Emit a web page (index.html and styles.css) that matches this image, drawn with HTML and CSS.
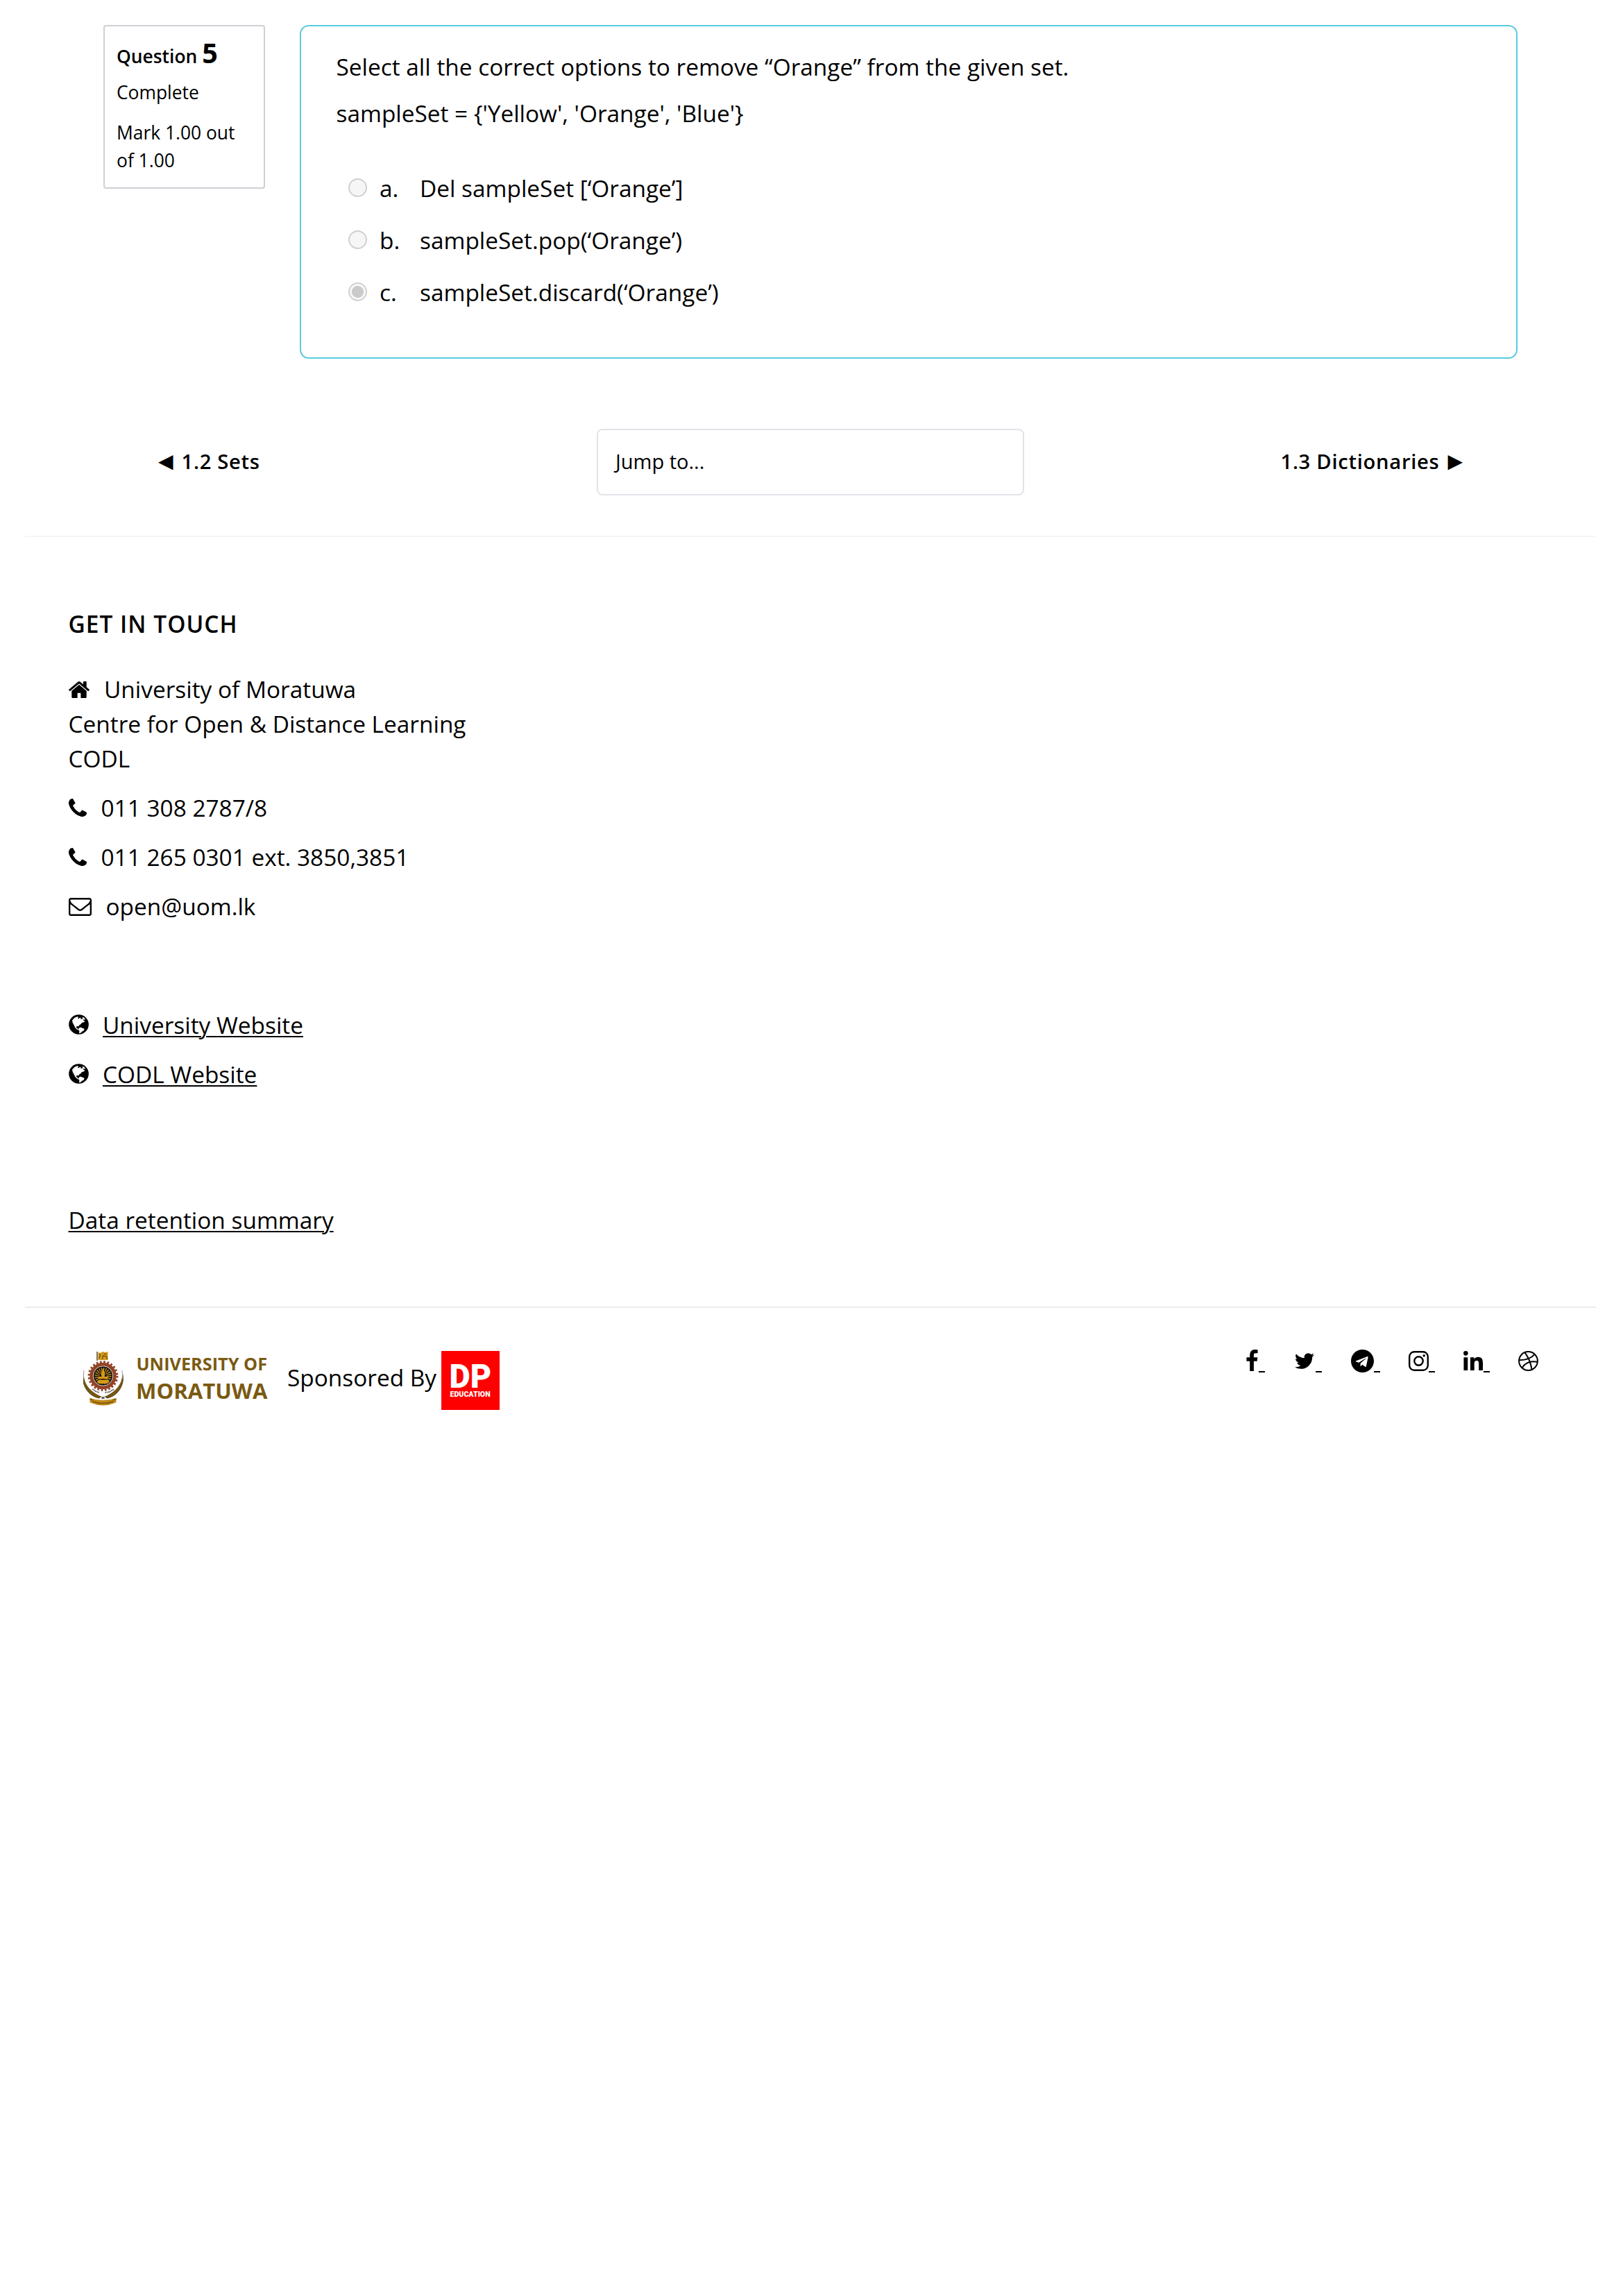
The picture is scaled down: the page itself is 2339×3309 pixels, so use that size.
FILE: index.html
```html
<!DOCTYPE html>
<html lang="en">
<head>
<meta charset="utf-8">
<title>Quiz review</title>
<link rel="stylesheet" href="styles.css">
</head>
<body>
<main class="page">
  <section class="question">
    <aside class="info">
      <h3 class="info-no">Question <span class="qno">5</span></h3>
      <div class="info-state">Complete</div>
      <div class="info-grade">Mark 1.00 out of 1.00</div>
    </aside>
    <div class="formulation">
      <p>Select all the correct options to remove “Orange” from the given set.</p>
      <p>sampleSet = {'Yellow', 'Orange', 'Blue'}</p>
      <div class="answers">
        <div class="answer"><span class="radio"></span><span class="letter">a.</span><span>Del sampleSet [‘Orange’]</span></div>
        <div class="answer"><span class="radio"></span><span class="letter">b.</span><span>sampleSet.pop(‘Orange’)</span></div>
        <div class="answer"><span class="radio checked"></span><span class="letter">c.</span><span>sampleSet.discard(‘Orange’)</span></div>
      </div>
    </div>
  </section>

  <nav class="activity-nav">
    <a class="prev"><span class="arrow">◀</span><span>1.2 Sets</span></a>
    <div class="jump">Jump to...</div>
    <a class="next"><span>1.3 Dictionaries</span><span class="arrow">▶</span></a>
  </nav>

  <footer class="footer">
    <h2 class="footer-title">GET IN TOUCH</h2>
    <div class="contact">
      <div class="contact-row">
        <div class="line"><svg class="icon home" viewBox="89 257 1614 1279"><path d="M1472 992v480q0 26-19 45t-45 19h-384v-384h-256v384h-384q-26 0-45-19t-19-45v-480q0-1 .5-3t.5-3l575-474 575 474q1 2 1 6zm223-69l-62 74q-8 9-21 11h-3q-13 0-21-7l-692-577-692 577q-12 8-24 7-13-2-21-11l-62-74q-8-10-7-23.5t11-21.5l719-599q32-26 76-26t76 26l244 204v-195q0-14 9-23t23-9h192q14 0 23 9t9 23v408l219 182q10 8 11 21.5t-7 23.5z"/></svg>University of Moratuwa</div>
        <div class="line">Centre for Open &amp; Distance Learning</div>
        <div class="line">CODL</div>
      </div>
      <div class="line"><svg class="icon phone" viewBox="192 128 1408 1408"><use href="#phone"/></svg>011 308 2787/8</div>
      <div class="line"><svg class="icon phone" viewBox="192 128 1408 1408"><use href="#phone"/></svg>011 265 0301 ext. 3850,3851</div>
      <div class="line"><svg class="icon mail" viewBox="0 256 1792 1408"><path d="M1664 1504v-768q-32 36-69 66-268 206-426 338-51 43-83 67t-86.5 48.5-102.5 24.5h-2q-48 0-102.5-24.5t-86.5-48.5-83-67q-158-132-426-338-37-30-69-66v768q0 13 9.5 22.5t22.5 9.5h1472q13 0 22.5-9.5t9.5-22.5zm0-1051v-24.5l-.5-13-3-12.5-5.5-9-9-7.5-14-2.5h-1472q-13 0-22.5 9.5t-9.5 22.5q0 168 147 284 193 152 401 317 6 5 35 29.5t46 37.5 44.5 31.5 50.5 27.5 43 9h2q20 0 43-9t50.5-27.5 44.5-31.5 46-37.5 35-29.5q208-165 401-317 54-43 100.5-115.5t46.5-131.5zm128-37v1088q0 66-47 113t-113 47h-1472q-66 0-113-47t-47-113v-1088q0-66 47-113t113-47h1472q66 0 113 47t47 113z"/></svg>open@uom.lk</div>
    </div>
    <div class="links">
      <div class="line"><svg class="icon globe" viewBox="0 0 29 29"><use href="#earth"/></svg><a>University Website</a></div>
      <div class="line"><svg class="icon globe" viewBox="0 0 29 29"><use href="#earth"/></svg><a>CODL Website</a></div>
    </div>
    <div class="line"><a>Data retention summary</a></div>
  </footer>

  <div class="bottom">
    <div class="sponsors">
      <svg class="uom" viewBox="0 0 270 84" role="img" aria-label="University of Moratuwa">
        <g transform="translate(-2.5 -3)">
          <!-- lion flag on top of the crest -->
          <path d="M22.500 4v13" stroke="#4a3a10" stroke-width="1.400"/>
          <path d="M24 5l3 1 3-2 4 1 4-1v12H24z" fill="#d29a1d"/>
          <path d="M25 14l2-4-1-3M30 15l1-5 5 1 1 4M32 7l4 1" fill="none" stroke="#5d430d" stroke-width="1.100"/>
          <!-- tusks -->
          <path d="M3 36C2 50 12 62 28 69L25 71C10 68-1 52 3 36zM59 36C60 50 50 62 34 69L37 71C52 68 63 52 59 36z" fill="#77560f" stroke="#5d450f" stroke-width="1"/>
          <path d="M3.500 31l-1 12M58.500 31l1 12" stroke="#999" stroke-width="1"/>
          <!-- gear and sun -->
          <circle cx="31" cy="39" r="20.300" fill="none" stroke="#934326" stroke-width="3.200" stroke-dasharray="2.660 2.660"/>
          <circle cx="31" cy="39" r="16.800" fill="none" stroke="#934326" stroke-width="5"/>
          <circle cx="31" cy="39" r="14.200" fill="#111" stroke="#d8cfc6" stroke-width="1"/>
          <circle cx="31" cy="39" r="8.500" fill="none" stroke="#bd8717" stroke-width="7" stroke-dasharray="1.300 1.370"/>
          <path d="M31 28l3 8-1 4h5v3H24v-3h5l-1-4zM24 45h14l2 3-3 2H25l-3-2z" fill="#d69a17"/>
          <path d="M16 58l4 3 6 2M34 63l6-1 7-4" fill="none" stroke="#555" stroke-width="2" stroke-dasharray="1.500 .8"/>
          <!-- ribbon -->
          <path d="M29 69l4 3m0-3l-4 3" stroke="#333" stroke-width="1.200"/>
          <path d="M12 71q19 6 38 0v6l-2 1q-17 7-34 0l-2-1z" fill="#c08a1a"/>
          <path d="M16 76q15 5 30 0M12 72l5 2M50 72l-5 2" fill="none" stroke="#7a5510" stroke-width="1.500"/>
        </g>
        <text class="uom-text" x="76.500" y="27.500" font-size="25.200" textLength="188.500" lengthAdjust="spacingAndGlyphs">UNIVERSITY OF</text>
        <text class="uom-text" x="76" y="68.500" font-size="31" textLength="189.500" lengthAdjust="spacingAndGlyphs">MORATUWA</text>
      </svg>
      <span class="sponsored">Sponsored By</span>
      <svg class="dp" viewBox="0 0 84 85" role="img" aria-label="DP Education">
        <rect width="84" height="85" fill="#fe0000"/>
        <text class="dp-big" x="11.500" y="53" textLength="60.500" lengthAdjust="spacingAndGlyphs">DP</text>
        <text class="dp-small" x="12.600" y="66" textLength="58" lengthAdjust="spacingAndGlyphs">EDUCATION</text>
      </svg>
    </div>
    <ul class="social">
      <li><svg class="facebook" viewBox="479 0 864 1664"><path d="M1343 12v264h-157q-86 0-116 36t-30 108v189h293l-39 296h-254v759h-306v-759h-255v-296h255v-218q0-186 104-288.500t277-102.500q147 0 228 12z"/></svg><i></i></li>
      <li><svg class="twitter" viewBox="108 256 1576 1280"><path d="M1684 408q-67 98-162 167 1 14 1 42 0 130-38 259.500t-115.500 248.500-184.500 210.500-258 146-323 54.500q-271 0-496-145 35 4 78 4 225 0 401-138-105-2-188-64.500t-114-159.500q33 5 61 5 43 0 85-11-112-23-185.500-111.500t-73.500-205.500v-4q68 38 146 41-66-44-105-115t-39-154q0-88 44-163 121 149 294.500 238.500t371.500 99.500q-8-38-8-74 0-134 94.500-228.500t228.500-94.500q140 0 236 102 109-21 205-78-37 115-142 178 93-10 186-50z"/></svg><i></i></li>
      <li><svg class="telegram" viewBox="0 8 496 496"><path d="M248 8C111 8 0 119 0 256s111 248 248 248 248-111 248-248S385 8 248 8zm121.800 169.900l-40.700 191.800c-3 13.600-11.100 16.900-22.400 10.500l-62-45.700-29.900 28.800c-3.300 3.300-6.100 6.100-12.500 6.100l4.400-63.100 114.900-103.800c5-4.400-1.100-6.900-7.700-2.500l-142 89.400-61.200-19.100c-13.300-4.200-13.600-13.300 2.800-19.700l239.100-92.200c11.100-4 20.800 2.700 17.200 19.500z"/></svg><i></i></li>
      <li><svg class="instagram" viewBox="0 0 29 29"><rect x="1.200" y="1.200" width="26.600" height="26.600" rx="7" fill="none" stroke="#000" stroke-width="2.400"/><circle cx="14.500" cy="14.500" r="6.200" fill="none" stroke="#000" stroke-width="2.400"/><circle cx="22.200" cy="6.800" r="1.800"/></svg><i></i></li>
      <li><svg class="linkedin" viewBox="0 0 448 448"><path d="M100.280 448H7.400V148.900h92.880zM53.790 108.100C24.090 108.100 0 83.500 0 53.800a53.790 53.790 0 0 1 107.580 0c0 29.700-24.100 54.300-53.790 54.300zM447.900 448h-92.680V302.400c0-34.700-.7-79.200-48.290-79.200-48.290 0-55.690 37.700-55.690 76.700V448h-92.780V148.900h89.080v40.800h1.300c12.400-23.500 42.690-48.300 87.880-48.300 94 0 111.280 61.900 111.280 142.300V448z"/></svg><i></i></li>
      <li><svg class="dribbble" viewBox="0 0 29 29"><g fill="none" stroke="#000" stroke-width="2"><circle cx="14.500" cy="14.500" r="13.400"/><path d="M9.500 2.200Q17.500 13 19.600 26.800M1.200 13.200Q16.500 13.500 23.800 4.700M5.600 24.300Q12.500 12.800 27.800 15.800"/></g></svg></li>
    </ul>
  </div>
</main>

<svg class="defs" aria-hidden="true">
  <symbol id="phone" viewBox="192 128 1408 1408" width="1408" height="1408" x="192" y="128">
    <path d="M1600 1240q0 27-10 70.500t-21 68.500q-21 50-122 106-94 51-186 51-27 0-53-3.500t-57.500-12.500-47-14.500-55.500-20.500-49-18q-98-35-175-83-127-79-264-216t-216-264q-48-77-83-175-3-9-18-49t-20.500-55.500-14.500-47-12.500-57.500-3.500-53q0-92 51-186 56-101 106-122 25-11 68.500-21t70.500-10q14 0 21 3 18 6 53 76 11 19 30 54t35 63.500 31 53.500q3 4 17.500 25t21.500 35.500 7 28.500q0 20-28.500 50t-62 55-62 53-28.500 46q0 9 5 22.500t8.500 20.500 14 24 11.500 19q76 137 174 235t235 174q2 1 19 11.500t24 14 20.500 8.500 22.500 5q18 0 46-28.500t53-62 55-62 50-28.500q14 0 28.500 7t35.500 21.500 25 17.500q25 15 53.500 31t63.500 35 54 30q70 35 76 53 3 7 3 21z"/>
  </symbol>
  <symbol id="earth" viewBox="0 0 29 29">
    <circle cx="14.500" cy="14.500" r="14.300"/>
    <path fill="#fff" d="M5 8.500L8.500 4.800 13 3l1 1.300-1.200 1.400 2 .4 1.400-1.500 1.500.9-.6 1.600 2.800-.8 1.800 1.300-.6 1.400 2.500.6-1.800 1.600-2.800.7-1.800 2.300-2.200 1.400-.6 1.800-1.400-.6-2 .8.200 1.800 1.700.3.500 1.600 1.800.6-1 .8-2.600-1.400-2.400-2.600-1.600-3.400-1.800-3z"/>
    <path fill="#fff" d="M14.800 19.400l2.400-.8 2.600 1.200 2.800 1-.8 2.400-2.600 1.600-2.400 2.200-1.800.2.400-3-1.200-2.400z"/>
    <path fill="#fff" d="M19.800 3.600l2.600 1.400 1.800 2.200-1.600.4-2.400-1.400z"/>
  </symbol>
</svg>
</body>
</html>
```
FILE: styles.css
```css
* { box-sizing: border-box; }
body {
  margin: 0;
  background: #fff;
  color: #000;
  font: 33.4px/50px "Open Sans", "Noto Sans", sans-serif;
}
h2, h3, p, ul { margin: 0; padding: 0; font-weight: inherit; font-size: inherit; }
svg { display: block; flex: none; }
.defs { position: absolute; width: 0; height: 0; }
.page { padding: 36px 39px 0 36px; }

/* question */
.question { display: flex; align-items: flex-start; gap: 50px; padding: 0 113px 0 113px; }
.info {
  width: 233px;
  height: 236px;
  padding: 17.500px 16px 0 17px;
  border: 2px solid #cdd0d5;
  border-radius: 4px;
  font-size: 26.400px;
  line-height: 39.400px;
}
.info-no { font-weight: 600; line-height: 50px; height: 50px; white-space: nowrap; }
.qno { font-size: 39.500px; font-weight: 700; line-height: 1; }
.info-state { margin-top: 8.500px; }
.info-grade { margin-top: 19px; }
.formulation {
  flex: 1;
  height: 481px;
  padding: 33px 50px 0 50.500px;
  border: 2px solid #57cbde;
  border-radius: 13px;
}
.formulation p + p { margin-top: 17px; }
.answers { display: flex; flex-direction: column; gap: 25px; padding: 58px 0 0 17px; }
.answer { display: flex; align-items: center; }
.radio {
  width: 27px;
  height: 27px;
  margin: -1px 18.500px 0 0;
  border: 2px solid #d0d0d0;
  border-radius: 50%;
  background: #f6f6f6;
}
.radio.checked { background: radial-gradient(circle, #cacaca 0 8px, #f8f8f8 9px); }
.letter { width: 58px; }

/* activity navigation */
.activity-nav {
  display: grid;
  grid-template-columns: 632px 616px 1fr;
  align-items: center;
  height: 257px;
  padding: 101px 192px 58px 192px;
  border-bottom: 2px solid #f4f5f5;
  font-size: 29.200px;
}
.activity-nav a { display: flex; align-items: center; margin-top: -2px; font-weight: 600; letter-spacing: .7px; }
.prev { gap: 12px; }
.next { justify-content: flex-end; gap: 12px; }
.arrow { font: 28px/50px "DejaVu Sans", sans-serif; letter-spacing: 0; }
.jump {
  height: 96px;
  padding: 20px 25px;
  border: 2px solid #e1e3e8;
  border-radius: 8px;
  font-size: 29px;
}

/* footer */
.footer { height: 1111px; padding: 100px 62.500px 0; border-bottom: 2px solid #e9eded; }
.footer-title { font-weight: 600; letter-spacing: 1.050px; }
.contact { display: flex; flex-direction: column; gap: 21px; margin-top: 43.500px; }
.line { display: flex; align-items: center; height: 50px; }
.icon.home { width: 30px; height: 24px; margin: 3px 21.500px 0 0; }
.icon.phone { width: 26px; height: 26px; margin-right: 21px; }
.icon.mail { width: 33px; height: 26px; margin: 3px 21px 0 0; }
.icon.globe { width: 29px; height: 29px; margin-right: 20.500px; }
.footer a { text-decoration: underline; text-decoration-thickness: 2px; text-underline-offset: 3px; }
.links { display: flex; flex-direction: column; gap: 21px; margin: 121px 0 160px; }

.bottom { display: flex; justify-content: space-between; padding: 62px 83px 0 84px; }
.sponsors { display: flex; align-items: flex-start; }
.uom { width: 270px; height: 84px; margin-right: 24px; }
.uom-text { font-family: "Open Sans", sans-serif; font-weight: 700; fill: #7a5a12; }
.sponsored { width: 222px; padding-top: 13px; white-space: nowrap; }
.dp { width: 84px; height: 85px; }
.dp text { fill: #fff; font-family: Roboto, sans-serif; font-weight: 900; }
.dp-big { font-size: 49px; }
.dp-small { font-size: 11.500px; }
.social { display: flex; align-items: flex-start; list-style: none; height: 34px; margin-top: -3px; }
.social li { display: flex; align-items: flex-end; height: 34px; }
.social i { width: 9px; height: 2px; background: #000; }
.facebook { width: 17px; height: 31px; margin: 0 1px 2px 0; }
.twitter { width: 28px; height: 23px; margin: 0 2px 5px 43px; }
.telegram { width: 33px; height: 33px; margin-left: 42px; }
.instagram { width: 29px; height: 29px; margin: 0 0 2px 41px; }
.linkedin { width: 28px; height: 28px; margin: 0 1px 3px 41px; }
.dribbble { width: 29px; height: 29px; margin: 0 0 2px 41px; }
```
